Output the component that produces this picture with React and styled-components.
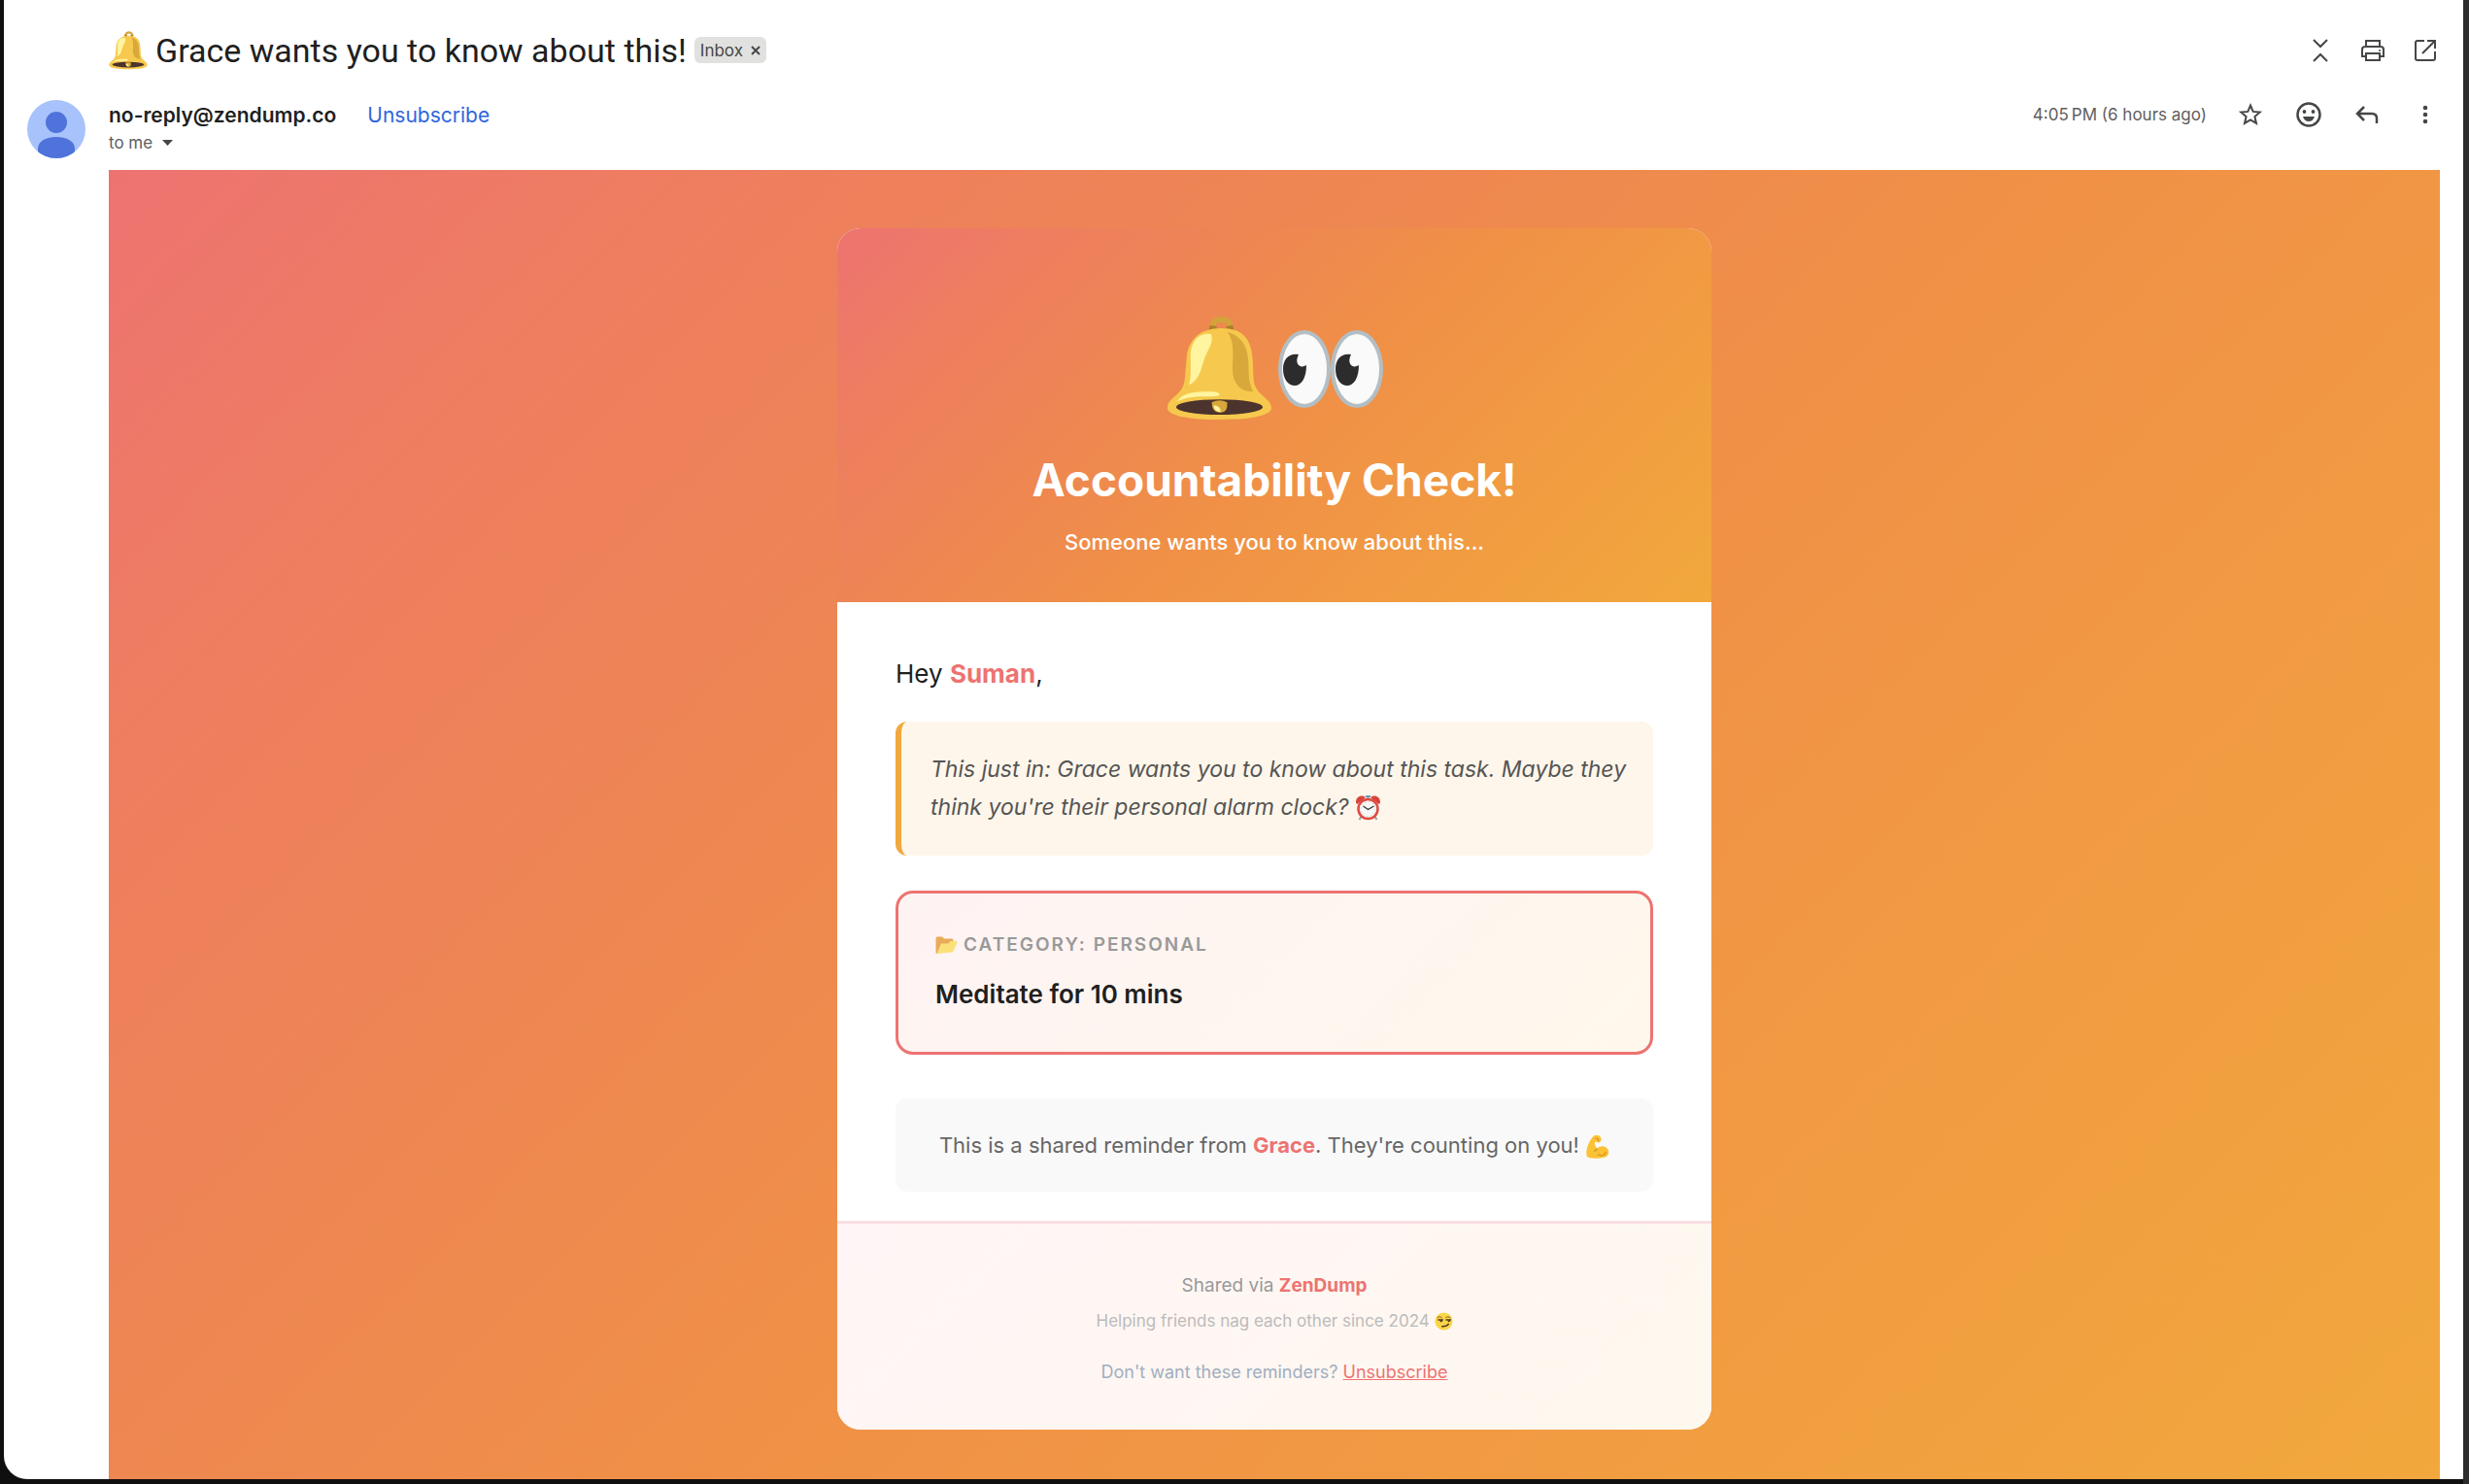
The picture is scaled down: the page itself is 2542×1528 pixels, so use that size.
import styled, { createGlobalStyle } from 'styled-components'

const GlobalStyle = createGlobalStyle`
    * {
        box-sizing: border-box;
    }
    body {
        margin: 0;
        font-family: Inter, "Liberation Sans", sans-serif;
        color: #1f1f1f;
    }
    h1, h2, h3, p {
        margin: 0;
    }
`

const sunset = 'linear-gradient(135deg, #ed7371 0%, #ee7d61 15%, #ee8751 36%, #f09047 52%, #f2a83c 100%)'

const Frame = styled.div`
    height: 100vh;
    padding: 0 6px 5px 4px;
    background: linear-gradient(to left, #2c2c2b 6px, #0f0f0f 6px);
`

const Mail = styled.main`
    height: 100%;
    overflow: hidden;
    padding: 0 24px;
    background: #fff;
    border-bottom-left-radius: 24px;
`

const SubjectRow = styled.header`
    display: flex;
    align-items: center;
    justify-content: space-between;
    height: 103px;
    padding-left: 84px;
`

const Subject = styled.div`
    display: flex;
    align-items: center;
    gap: 8px;
`

const SubjectText = styled.h1`
    font-family: Roboto, sans-serif;
    font-size: 34px;
    line-height: 42px;
    font-weight: 400;
`

const Chip = styled.span`
    display: flex;
    align-items: center;
    gap: 8px;
    height: 27px;
    padding: 0 6px;
    border-radius: 6px;
    background: #e1e1e0;
    color: #444746;
    font-size: 17px;
`

const IconButton = styled.button`
    display: flex;
    padding: 0;
    border: 0;
    background: none;
    color: #444746;
    cursor: pointer;
`

const Icons = styled.div`
    display: flex;
    align-items: center;
    gap: ${props => props.$gap}px;
`

const SenderRow = styled.section`
    display: flex;
    height: 72px;
    gap: 24px;
`

const SenderInfo = styled.div`
    flex: 1;
    display: flex;
    flex-direction: column;
`

const SenderLine = styled.div`
    display: flex;
    align-items: center;
    justify-content: space-between;
    height: 30px;
`

const Sender = styled.div`
    display: flex;
    align-items: center;
    gap: 32px;
    font-size: 21px;
`

const Address = styled.h3`
    font-size: 21px;
    font-weight: 600;
`

const TopLink = styled.a`
    color: #2f66de;
    font-size: 21px;
    text-decoration: none;
`

const Recipient = styled.button`
    display: flex;
    align-items: center;
    gap: 10px;
    height: 28px;
    padding: 0;
    border: 0;
    background: none;
    color: #5e5e5e;
    font-family: inherit;
    font-size: 17px;
`

const Time = styled.span`
    color: #5e5e5e;
    font-size: 17px;
`

const Backdrop = styled.div`
    margin-left: 84px;
    padding: 60px;
    background: ${sunset};
`

const Card = styled.article`
    max-width: 900px;
    margin: 0 auto;
    overflow: hidden;
    border-radius: 24px;
    background: #fff;
`

const Hero = styled.header`
    display: flex;
    flex-direction: column;
    align-items: center;
    height: 385px;
    padding-top: 90px;
    background: ${sunset};
    color: #fff;
    text-align: center;
`

const HeroEmoji = styled.div`
    display: flex;
    align-items: center;
    gap: 6px;
    margin-bottom: 31px;
`

const HeroTitle = styled.h2`
    margin-bottom: 17px;
    font-size: 46px;
    line-height: 58px;
    font-weight: 700;
`

const HeroText = styled.p`
    font-size: 22px;
    line-height: 36px;
    font-weight: 500;
`

const Body = styled.div`
    padding: 51px 60px 30px;
`

const Greeting = styled.p`
    margin-bottom: 27px;
    font-size: 26px;
    line-height: 45px;
`

const Accent = styled.strong`
    color: #ed7371;
    font-weight: 700;
`

const Quote = styled.blockquote`
    margin: 0 0 36px;
    padding: 30px 15px 30px 30px;
    border-left: 6px solid #f1a83c;
    border-radius: 12px;
    background: #fef6ea;
    color: #555;
    font-size: 23px;
    line-height: 39px;
    font-style: italic;
`

const Task = styled.section`
    margin-bottom: 45px;
    padding: 38px;
    border: 3px solid #ed7371;
    border-radius: 18px;
    background: linear-gradient(135deg, #fef3f3, #fef8ec);
`

const Category = styled.p`
    display: flex;
    align-items: center;
    gap: 6px;
    margin-bottom: 15px;
    color: #999;
    font-size: 19px;
    line-height: 30px;
    font-weight: 600;
    letter-spacing: 2px;
    text-transform: uppercase;
`

const TaskTitle = styled.h3`
    font-size: 26px;
    line-height: 42px;
    font-weight: 600;
`

const Note = styled.p`
    padding: 30px;
    border-radius: 12px;
    background: #f9f9f9;
    color: #666;
    font-size: 22px;
    line-height: 36px;
    text-align: center;
`

const Footer = styled.footer`
    height: 215px;
    padding-top: 46px;
    border-top: 3px solid #fadfe2;
    background: linear-gradient(135deg, #fff5f6, #fef8ee);
    text-align: center;
`

const FooterText = styled.p`
    color: ${props => props.$color};
    font-size: ${props => props.$size}px;
    line-height: 36px;
    margin-bottom: ${props => props.$space || 0}px;
`

const FooterLink = styled.a`
    color: #ed7371;
`

const Glyph = styled.svg`
    display: inline-block;
    flex: none;
    vertical-align: ${props => props.$drop || 0}px;
`

const Bell = ({ size }) => (
    <Glyph width={size} height={size} viewBox="0 0 110 108" role="img" aria-label="bell">
        <path d="M48 15Q46 3 57 3Q68 3 66 15" fill="none" stroke="#d3a23a" strokeWidth="6" />
        <path d="M45 9l-1 5h8v-4zM69 9l1 5h-8v-4z" fill="#a98029" />
        <path d="M57 12C34 12 23 24 21 42C19 60 20 68 16 75C11 83 1 86 1 95C1 103 25 107 55 107C85 107 109 103 109 95C109 87 98 83 93 74C89 67 91 56 89 40C87 22 78 12 57 12Z" fill="#f6c94e" />
        <path d="M63 16C73 28 67 48 69 60C71 71 77 78 90 78C84 66 86 58 85 46C84 31 78 20 63 16Z" fill="#d8a83b" />
        <path d="M45 18C33 17 25 26 25 42C25 58 26 64 23 71C34 67 36 54 39 45C42 35 48 30 47 21Q47 18 45 18Z" fill="#fff5a0" />
        <path d="M11 88C17 79 30 78 45 78C52 78 55 79 55 81C55 83 48 83 40 83C26 83 18 85 11 88Z" fill="#fff5a0" />
        <ellipse cx="55" cy="94" rx="45" ry="8" fill="#4c332d" />
        <path d="M47 89Q55 85 63 89Q64 100 56 100Q47 100 47 89Z" fill="#d8a83b" />
        <path d="M49 92Q57 93 56 99Q49 99 49 92Z" fill="#fff5a0" />
    </Glyph>
)

const Eye = ({ x }) => (
    <g transform={`translate(${x} 0)`}>
        <ellipse cx="27" cy="41" rx="25" ry="38" fill="#fafafa" stroke="#b3bec4" strokeWidth="4" />
        <path d="M21 26C11 24 5 31 5 41C5 51 10 58 17 58C24 58 29 50 29 37C23 41 16 36 21 26Z" fill="#2c2c2c" />
    </g>
)

const Eyes = () => (
    <Glyph width="108" height="82" viewBox="0 0 108 82" role="img" aria-label="eyes">
        <Eye x={0} />
        <Eye x={54} />
    </Glyph>
)

const Clock = () => (
    <Glyph width="27" height="27" viewBox="0 0 54 54" $drop={-6} role="img" aria-label="alarm clock">
        <path d="M14 44l-5 8M40 44l5 8" stroke="#8fa3ad" strokeWidth="4" />
        <path d="M27 3v8M22 4h10" stroke="#6d9cb8" strokeWidth="4" />
        <path d="M2 16C2 4 14 0 22 6L5 20Q2 19 2 16ZM52 16C52 4 40 0 32 6L49 20Q52 19 52 16Z" fill="#d8433a" />
        <circle cx="27" cy="30" r="20" fill="#f8f8f6" stroke="#df4b41" strokeWidth="5" />
        <circle cx="27" cy="30" r="15" fill="none" stroke="#bbb" strokeWidth="2" strokeDasharray="2 6" />
        <path d="M17 24l10 7 12-7" fill="none" stroke="#333" strokeWidth="2.5" />
    </Glyph>
)

const Folder = () => (
    <Glyph width="23" height="20" viewBox="0 0 46 40" role="img" aria-label="open folder">
        <path d="M1 6Q1 3 4 3H14L18 7H34Q37 7 37 10V30L3 38Q1 38 1 35Z" fill="#e9ab59" />
        <path d="M12 17H27L31 12H44Q46 12 45 15L37 33Q36 35 33 35L3 38Z" fill="#fbe07a" />
    </Glyph>
)

const Arm = () => (
    <Glyph width="25" height="25" viewBox="0 0 50 50" $drop={-6} role="img" aria-label="flexed biceps">
        <path d="M18 3C23 0 29 1 32 6C35 12 32 17 27 17C24 17 23 15 20 16C19 22 22 26 25 29C31 22 43 23 47 31C51 40 46 48 36 48C25 50 9 50 4 46C-1 36 8 12 18 3Z" fill="#fbc233" />
        <path d="M25 29C24 32 21 34 18 34M26 41C32 46 41 43 43 36M20 8l6 1 2 5" fill="none" stroke="#d8932a" strokeWidth="2.5" />
    </Glyph>
)

const Smirk = () => (
    <Glyph width="19" height="19" viewBox="0 0 40 40" $drop={-4} role="img" aria-label="smirking face">
        <circle cx="20" cy="20" r="19" fill="#fbd548" />
        <path d="M6 12Q11 8 16 12M24 12Q29 8 34 12" fill="none" stroke="#80602a" strokeWidth="2" />
        <path d="M7 17H17Q16 21 12 20M24 17H34Q33 21 29 20" fill="none" stroke="#4f3c22" strokeWidth="3" />
        <path d="M15 31Q26 32 31 25" fill="none" stroke="#4f3c22" strokeWidth="3" />
    </Glyph>
)

const Avatar = () => (
    <Glyph width="60" height="60" viewBox="0 0 60 60" role="img" aria-label="Sender">
        <clipPath id="round"><circle cx="30" cy="30" r="30" /></clipPath>
        <g clipPath="url(#round)">
            <rect width="60" height="60" fill="#a8c2fb" />
            <circle cx="30" cy="23" r="11" fill="#4f73db" />
            <path d="M11 64V50C11 42 20 38 30 38C40 38 49 42 49 50V64Z" fill="#4f73db" />
        </g>
    </Glyph>
)

const Icon = ({ label, children }) => (
    <IconButton type="button" aria-label={label}>
        <svg width="30" height="30" viewBox="0 0 30 30" fill="none" stroke="currentColor" strokeWidth="2">
            {children}
        </svg>
    </IconButton>
)

const App = () => (
    <Frame>
        <GlobalStyle />
        <Mail>
            <SubjectRow>
                <Subject>
                    <Bell size={40} />
                    <SubjectText>Grace wants you to know about this!</SubjectText>
                    <Chip>
                        Inbox
                        <IconButton type="button" aria-label="Remove label Inbox">
                            <svg width="10" height="10" viewBox="0 0 10 10" stroke="currentColor" strokeWidth="2">
                                <path d="M1 1l8 8M9 1l-8 8" />
                            </svg>
                        </IconButton>
                    </Chip>
                </Subject>
                <Icons $gap={24}>
                    <Icon label="Collapse all">
                        <path d="M8 4l7 7 7-7M8 26l7-7 7 7" />
                    </Icon>
                    <Icon label="Print all">
                        <path d="M8 11V5h14v6M8 21H4v-7q0-3 3-3h16q3 0 3 3v7h-4" />
                        <path d="M8 18h14v7H8z" />
                        <circle cx="22" cy="15" r="1" fill="currentColor" stroke="none" />
                    </Icon>
                    <Icon label="In new window">
                        <path d="M14 5H7q-2 0-2 2v16q0 2 2 2h16q2 0 2-2v-7M17 5h8v8M25 5L12 18" />
                    </Icon>
                </Icons>
            </SubjectRow>
            <SenderRow>
                <Avatar />
                <SenderInfo>
                    <SenderLine>
                        <Sender>
                            <Address>no-reply@zendump.co</Address>
                            <TopLink href="#unsubscribe">Unsubscribe</TopLink>
                        </Sender>
                        <Icons $gap={30}>
                            <Time>4:05{'\u202f'}PM (6 hours ago)</Time>
                            <Icon label="Star">
                                <path d="M15 5.500l2.700 6.400 7 .6-5.300 4.600 1.600 6.800L15 20.300l-6 3.600 1.600-6.800-5.300-4.600 7-.6z" />
                            </Icon>
                            <Icon label="Add reaction">
                                <circle cx="15" cy="15" r="11.500" strokeWidth="2.500" />
                                <circle cx="10.500" cy="12" r="1.900" fill="currentColor" stroke="none" />
                                <circle cx="19.500" cy="12" r="1.900" fill="currentColor" stroke="none" />
                                <path d="M9 17h12q-1.500 5-6 5t-6-5z" fill="currentColor" stroke="none" />
                            </Icon>
                            <Icon label="Reply">
                                <path d="M12 7l-7 7 7 7M5 14h15q5 0 5 5v5" strokeWidth="2.500" />
                            </Icon>
                            <Icon label="More">
                                <g fill="currentColor" stroke="none">
                                    <circle cx="15" cy="8" r="2.300" />
                                    <circle cx="15" cy="15" r="2.300" />
                                    <circle cx="15" cy="22" r="2.300" />
                                </g>
                            </Icon>
                        </Icons>
                    </SenderLine>
                    <Recipient type="button">
                        to me
                        <svg width="11" height="6" viewBox="0 0 11 6">
                            <path d="M0 0h11l-5.500 6z" fill="#444746" />
                        </svg>
                    </Recipient>
                </SenderInfo>
            </SenderRow>
            <Backdrop>
                <Card>
                    <Hero>
                        <HeroEmoji>
                            <Bell size={109} />
                            <Eyes />
                        </HeroEmoji>
                        <HeroTitle>Accountability Check!</HeroTitle>
                        <HeroText>Someone wants you to know about this...</HeroText>
                    </Hero>
                    <Body>
                        <Greeting>Hey <Accent>Suman</Accent>,</Greeting>
                        <Quote>
                            This just in: Grace wants you to know about this task. Maybe they think you're their personal alarm clock? <Clock />
                        </Quote>
                        <Task>
                            <Category><Folder />Category: Personal</Category>
                            <TaskTitle>Meditate for 10 mins</TaskTitle>
                        </Task>
                        <Note>
                            This is a shared reminder from <Accent>Grace</Accent>. They're counting on you! <Arm />
                        </Note>
                    </Body>
                    <Footer>
                        <FooterText $color="#999" $size={19}>Shared via <Accent>ZenDump</Accent></FooterText>
                        <FooterText $color="#bbb" $size={17} $space={17}>Helping friends nag each other since 2024 <Smirk /></FooterText>
                        <FooterText $color="#a0aec0" $size={18}>
                            Don't want these reminders? <FooterLink href="#unsubscribe">Unsubscribe</FooterLink>
                        </FooterText>
                    </Footer>
                </Card>
            </Backdrop>
        </Mail>
    </Frame>
)

export default App
